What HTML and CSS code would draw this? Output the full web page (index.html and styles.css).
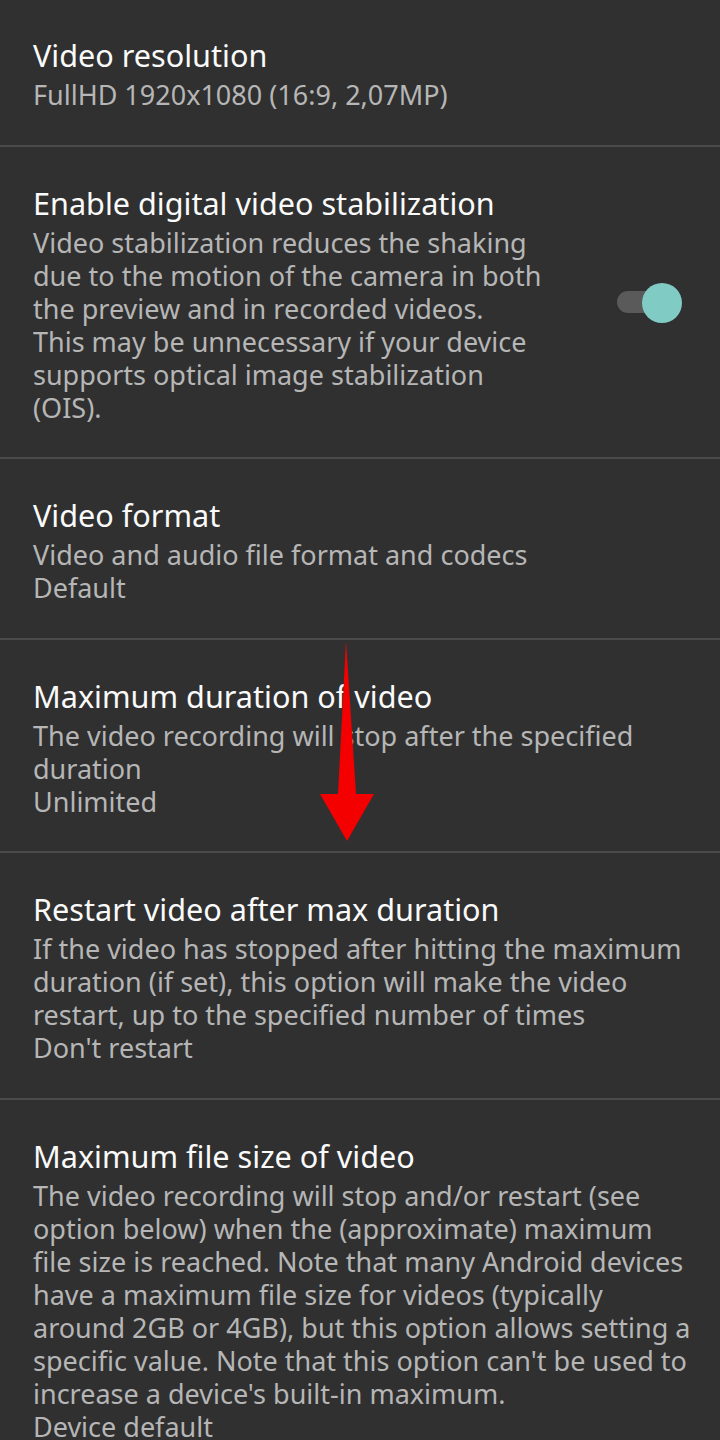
FILE: index.html
```html
<!DOCTYPE html>
<html lang="en">
<head>
    <meta charset="UTF-8">
    <title>Video settings</title>
    <link rel="stylesheet" href="styles.css">
</head>
<body>
<div class="prefList">
    <div class="pref">
        <div class="prefText">
            <div class="prefTitle">Video resolution</div>
            <div class="prefSummary">FullHD 1920x1080 (16:9, 2,07MP)</div>
        </div>
    </div>
    <div class="pref">
        <div class="prefText">
            <div class="prefTitle">Enable digital video stabilization</div>
            <div class="prefSummary">Video stabilization reduces the shaking<br>due to the motion of the camera in both<br>the preview and in recorded videos.<br>This may be unnecessary if your device<br>supports optical image stabilization<br>(OIS).</div>
        </div>
        <div class="switch">
            <span class="switchTrack"></span>
            <span class="switchThumb"></span>
        </div>
    </div>
    <div class="pref">
        <div class="prefText">
            <div class="prefTitle">Video format</div>
            <div class="prefSummary">Video and audio file format and codecs<br>Default</div>
        </div>
    </div>
    <div class="pref">
        <div class="prefText">
            <div class="prefTitle">Maximum duration of video</div>
            <div class="prefSummary">The video recording will stop after the specified<br>duration<br>Unlimited</div>
        </div>
        <!-- red arrow pointing at the next option -->
        <svg class="arrow" width="60" height="204" viewBox="0 0 60 204">
            <polygon points="29,0 39,153 57,153 30,200 3,153 21,153" fill="#f40000"/>
        </svg>
    </div>
    <div class="pref">
        <div class="prefText">
            <div class="prefTitle">Restart video after max duration</div>
            <div class="prefSummary">If the video has stopped after hitting the maximum<br>duration (if set), this option will make the video<br>restart, up to the specified number of times<br>Don't restart</div>
        </div>
    </div>
    <div class="pref">
        <div class="prefText">
            <div class="prefTitle">Maximum file size of video</div>
            <div class="prefSummary">The video recording will stop and/or restart (see<br>option below) when the (approximate) maximum<br>file size is reached. Note that many Android devices<br>have a maximum file size for videos (typically<br>around 2GB or 4GB), but this option allows setting a<br>specific value. Note that this option can't be used to<br>increase a device's built-in maximum.<br>Device default</div>
        </div>
    </div>
</div>
</body>
</html>
```

FILE: styles.css
```css
*{
    margin: 0;
    padding: 0;
}
body{
    background-color: #303030;
    font-family: "Noto Sans", "Open Sans", sans-serif;
    width: 720px;
    height: 1440px;
    overflow: hidden;
}
.prefList{
    display: flex;
    flex-direction: column;
}
.pref{
    display: flex;
    align-items: center;
    padding: 36px 0 33.5px 33px;
    border-top: 2px solid #4b4b4b;
    position: relative;
}
.pref:first-child{
    border-top: none;
    padding-top: 35px;
}
.prefText{
    flex: 1;
    white-space: nowrap;
}
.prefTitle{
    color: #fafafa;
    font-size: 30.6px;
    line-height: 40px;
    margin-bottom: 3px;
}
.prefSummary{
    color: #b6b6b6;
    font-size: 27px;
    line-height: 33px;
}
/*开关*/
.switch{
    position: relative;
    width: 66px;
    height: 40px;
    flex: none;
    margin-right: 38px;
}
.switchTrack{
    position: absolute;
    left: 1px;
    top: 8px;
    width: 46px;
    height: 22px;
    border-radius: 11px;
    background-color: #5a5a5a;
}
.switchThumb{
    position: absolute;
    right: 0;
    top: 0;
    width: 40px;
    height: 40px;
    border-radius: 50%;
    background-color: #80cbc4;
}
.arrow{
    position: absolute;
    left: 317px;
    top: 1px;
}
```
